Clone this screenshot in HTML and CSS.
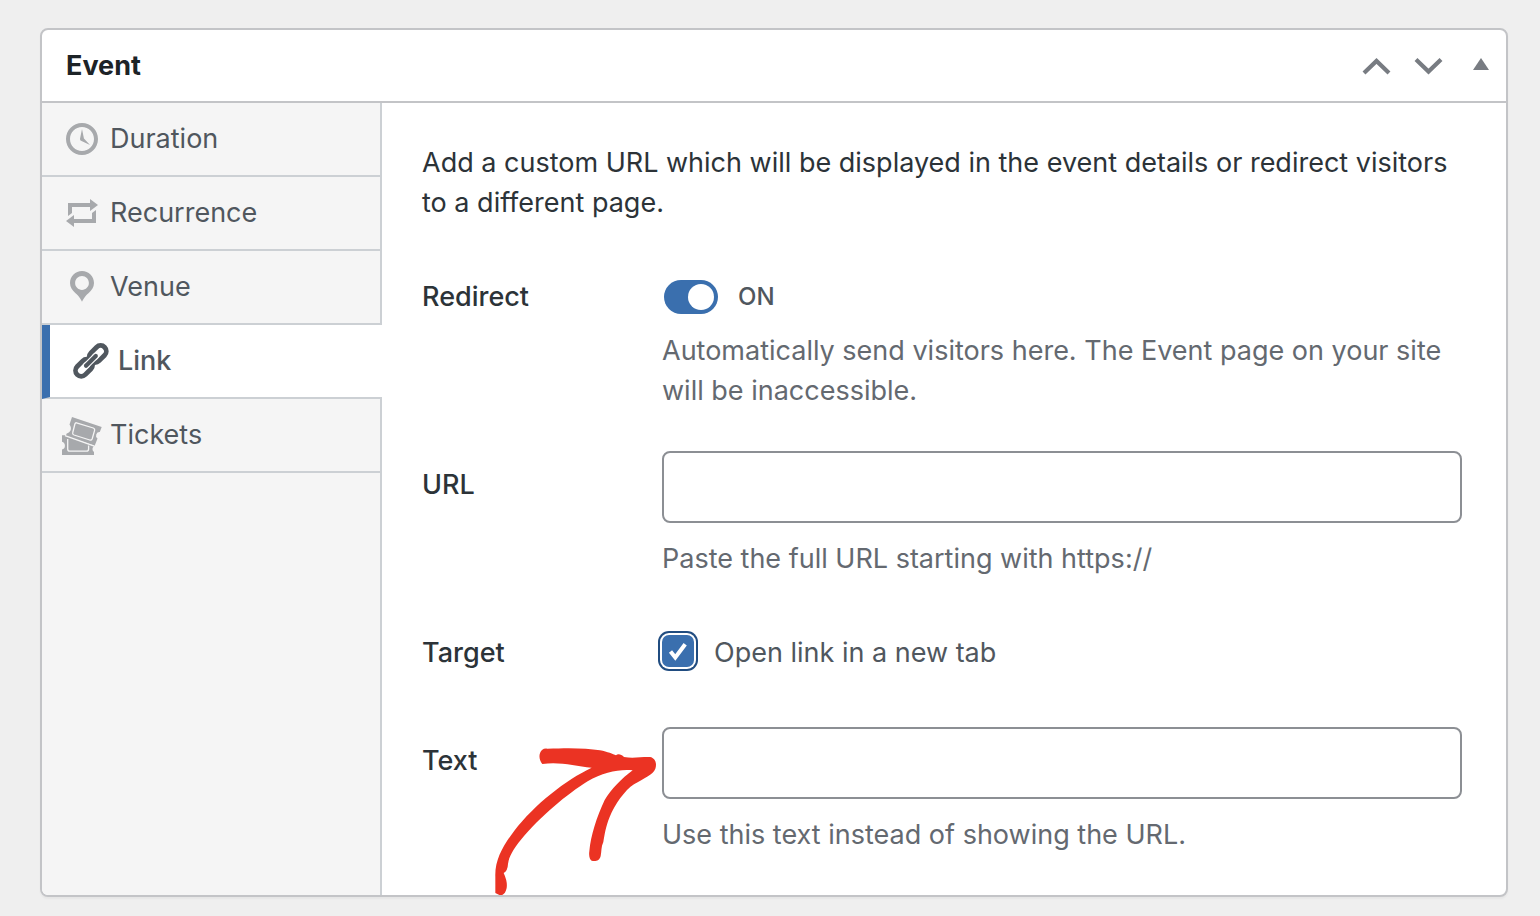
FILE: index.html
```html
<!DOCTYPE html>
<html lang="en">
<head>
<meta charset="utf-8">
<meta name="viewport" content="width=device-width, initial-scale=1">
<title>Event</title>
<link rel="stylesheet" href="styles.css">
</head>
<body>
<main class="panel">
  <header class="panel-header">
    <h2 class="panel-title">Event</h2>
    <div class="panel-actions">
      <button class="action" type="button" aria-label="Move up"><svg viewBox="0 0 52 40" aria-hidden="true"><path d="M14 27 26.500 15 39 27" fill="none" stroke="currentColor" stroke-width="4.200"/></svg></button>
      <button class="action" type="button" aria-label="Move down"><svg viewBox="0 0 52 40" aria-hidden="true"><path d="M14 13.500 26.500 25.500 39 13.500" fill="none" stroke="currentColor" stroke-width="4.200"/></svg></button>
      <button class="action" type="button" aria-label="Toggle panel"><svg viewBox="0 0 52 40" aria-hidden="true"><path d="M27 12 35 24H19z" fill="currentColor"/></svg></button>
    </div>
  </header>
  <div class="panel-body">
    <nav class="tabs" aria-label="Event settings">
      <a class="tab" href="#duration">
        <svg class="tab-icon" viewBox="0 0 20 20" aria-hidden="true"><path d="M10 2c4.420 0 8 3.580 8 8s-3.580 8-8 8-8-3.580-8-8 3.580-8 8-8zm0 14c3.310 0 6-2.690 6-6s-2.690-6-6-6-6 2.690-6 6 2.690 6 6 6zm-.71-5.290c.07.05.14.1.23.15l-.02.02L14 13l-3.030-3.190L10 5l-.97 4.810h.01c0 .02-.01.05-.02.09S9 9.970 9 10c0 .28.1.52.29.71z"/></svg>
        Duration</a>
      <a class="tab" href="#recurrence">
        <svg class="tab-icon" viewBox="0 0 20 20" aria-hidden="true"><path d="M5 7v3l-2 1.500V5h11V3l4 3.010L14 9V7H5zm10 6v-3l2-1.500V15H6v2l-4-3.010L6 11v2h9z"/></svg>
        Recurrence</a>
      <a class="tab" href="#venue">
        <svg class="tab-icon" viewBox="0 0 20 20" aria-hidden="true"><path d="M10 2C6.690 2 4 4.690 4 8c0 2.020 1.170 3.710 2.530 4.890.43.37 1.180.96 1.850 1.830.74.97 1.410 2.010 1.620 2.710.21-.7.88-1.740 1.620-2.710.67-.87 1.420-1.460 1.850-1.830C14.830 11.710 16 10.020 16 8c0-3.310-2.690-6-6-6zm0 2.560c1.900 0 3.440 1.540 3.440 3.440S11.900 11.440 10 11.440 6.560 9.900 6.560 8 8.100 4.560 10 4.560z"/></svg>
        Venue</a>
      <a class="tab tab-active" href="#link" aria-current="true">
        <svg class="tab-icon" viewBox="0 0 40 40" aria-hidden="true">
          <g transform="rotate(-45 20.900 19.900)" fill="none">
            <rect class="link-ring" x="1.500" y="14.200" width="19.400" height="11.400" rx="5.700"/>
            <rect class="link-ring" x="20.900" y="14.200" width="19.400" height="11.400" rx="5.700"/>
            <path class="link-gap" d="M14 19.900H27.800"/>
            <path class="link-bar" d="M14 19.900H27.800"/>
          </g>
        </svg>
        Link</a>
      <a class="tab" href="#tickets">
        <svg class="tab-icon" viewBox="0 0 40 40" aria-hidden="true">
          <path d="M10 2 39.700 12 37.800 17A3.600 3.600 0 0 0 35.500 23.500L32.700 30.800 3.700 21 4.700 18.400C8.500 17.800 10.500 13.500 7.500 9.500z"/>
          <path d="M0 20.300H3L32 31.200A3.500 3.500 0 0 0 32 37V40H0V34.500A4 4 0 0 0 0 26.800z"/>
          <path class="ticket-line" d="M14.500 7.800 31.300 13Q33.100 13.700 32.600 15.400L30.200 23.700Q29.600 25.500 27.800 25L12 20Q10.200 19.300 10.700 17.700L12.900 9Q13.400 7.500 14.500 7.800zM5.700 24V34Q5.700 36.200 7.900 36.200H24.300Q26.600 36.200 26.600 34V30.500M3 20.600 32.300 31.200"/>
        </svg>
        Tickets</a>
    </nav>
    <form class="settings" id="link">
      <p class="intro">Add a custom URL which will be displayed in the event details or redirect visitors to a different page.</p>
      <div class="field">
        <label class="field-label" for="redirect">Redirect</label>
        <div>
          <div class="control"><input class="switch" type="checkbox" role="switch" id="redirect" checked><span class="switch-state">ON</span></div>
          <p class="help">Automatically send visitors here. The Event page on your site will be inaccessible.</p>
        </div>
      </div>
      <div class="field">
        <label class="field-label" for="url">URL</label>
        <div>
          <input class="text-input" type="text" id="url">
          <p class="help help-input">Paste the full URL starting with https://</p>
        </div>
      </div>
      <div class="field">
        <span class="field-label">Target</span>
        <div class="control">
          <span class="check-wrap"><input class="check" type="checkbox" id="target" checked><svg class="check-mark" viewBox="0 0 32 32" aria-hidden="true"><path d="M8.500 16.500 13.300 22.500 23.200 9.200" fill="none" stroke="#fff" stroke-width="4"/></svg></span>
          <label for="target">Open link in a new tab</label>
        </div>
      </div>
      <div class="field">
        <label class="field-label" for="text">Text</label>
        <div>
          <input class="text-input" type="text" id="text">
          <p class="help help-input">Use this text instead of showing the URL.</p>
        </div>
        <svg class="arrow" viewBox="0 0 600 570" aria-hidden="true"><path fill="#eb3323" d="M187 132C176 119 175 99 187 89Q192 85 202 86C270 83 320 84 360 91C383 95 399 103 408 106C413 100 424 102 432 111C460 116 485 110 510 111C527 114 531 132 526 146C519 165 492 174 462 193C434 211 405 253 389 291C377 320 374 343 370 366C363 380 365 394 362 408C359 423 345 425 335 422C329 418 326 407 328 394C332 347 350 291 374 240C393 209 425 175 458 151C417 147 370 157 323 184C262 222 181 289 124 358C100 387 86 412 84 432Q83 453 71 459Q83 485 80 504C77 520 68 527 60 526L46 519V470C44 419 71 374 103 332C165 252 257 180 335 143C285 138 238 124 187 132z"/></svg>
      </div>
    </form>
  </div>
</main>
</body>
</html>
```
FILE: styles.css
```css
*, *::before, *::after {
  box-sizing: border-box;
}

body {
  margin: 0;
  padding: 28px 32px 20px 40px;
  background: #efefef;
  color: #2c3338;
  font-family: Inter, "Liberation Sans", sans-serif;
  font-size: 27px;
  line-height: 40px;
}

h2, p {
  margin: 0;
}

.panel {
  background: #fff;
  border: 2px solid #c3c4c7;
  border-radius: 8px;
  box-shadow: 0 2px 2px rgba(0, 0, 0, 0.04);
  overflow: hidden;
}

.panel-header {
  display: flex;
  align-items: center;
  justify-content: space-between;
  height: 73px;
  padding-left: 24px;
  border-bottom: 2px solid #c3c4c7;
}

.panel-title {
  color: #1d2327;
  font-size: 27px;
  font-weight: 700;
}

.panel-actions {
  display: flex;
}

.action {
  width: 52px;
  height: 40px;
  padding: 0;
  border: 0;
  background: none;
  color: #787c82;
}

.action svg {
  display: block;
}

.panel-body {
  display: grid;
  grid-template-columns: 340px 1fr;
}

.tabs {
  background: linear-gradient(#ccd0d4, #ccd0d4) right / 2px 100% no-repeat #f5f5f5;
}

.tab {
  display: flex;
  align-items: center;
  gap: 8px;
  height: 74px;
  padding-left: 20px;
  border-bottom: 2px solid #ccd0d4;
  color: #50575e;
  text-decoration: none;
}

.tab-active {
  background: #fff;
  border-left: 8px solid #3a6fae;
  font-weight: 500;
}

.tab-icon {
  flex: none;
  width: 40px;
  height: 40px;
  fill: #a7a9ac;
}

.link-ring {
  stroke: #50575e;
  stroke-width: 4.8;
}

.link-gap {
  stroke: #fff;
  stroke-width: 6.4;
  stroke-linecap: round;
}

.link-bar {
  stroke: #50575e;
  stroke-width: 4.2;
  stroke-linecap: round;
}

.ticket-line {
  fill: none;
  stroke: #f5f5f5;
  stroke-width: 1.3;
}

.settings {
  display: grid;
  gap: 40px;
  padding: 40px 44px 40px 40px;
}

.field {
  display: grid;
  grid-template-columns: 240px 1fr;
  align-items: start;
  position: relative;
}

.field-label {
  line-height: 68px;
  font-weight: 500;
}

.control {
  display: flex;
  align-items: center;
  gap: 20px;
  min-height: 68px;
  color: #50575e;
}

.help {
  color: #646970;
}

.help-input {
  margin-top: 16px;
}

.text-input {
  display: block;
  width: 100%;
  height: 72px;
  padding: 0 16px;
  border: 2px solid #8c8f94;
  border-radius: 8px;
  background: #fff;
  font: inherit;
}

.switch {
  appearance: none;
  display: flex;
  width: 54px;
  height: 34px;
  margin: 0 0 0 2px;
  padding: 4px;
  border-radius: 17px;
  background: #3a6fae;
}

.switch::before {
  content: "";
  width: 26px;
  height: 26px;
  border-radius: 50%;
  background: #fff;
}

.switch:checked {
  justify-content: flex-end;
}

.switch-state {
  font-size: 24px;
  font-weight: 500;
}

.check-wrap {
  display: grid;
  margin-bottom: 4px;
}

.check,
.check-mark {
  grid-area: 1 / 1;
  width: 32px;
  height: 32px;
}

.check {
  appearance: none;
  margin: 0;
  border-radius: 7px;
  background: #3a6fae;
  box-shadow: 0 0 0 2px #fff, 0 0 0 4px #204c80;
}

.check-mark {
  pointer-events: none;
}

.arrow {
  position: absolute;
  top: -7px;
  left: 58px;
  width: 200px;
  height: 190px;
  pointer-events: none;
}
```
